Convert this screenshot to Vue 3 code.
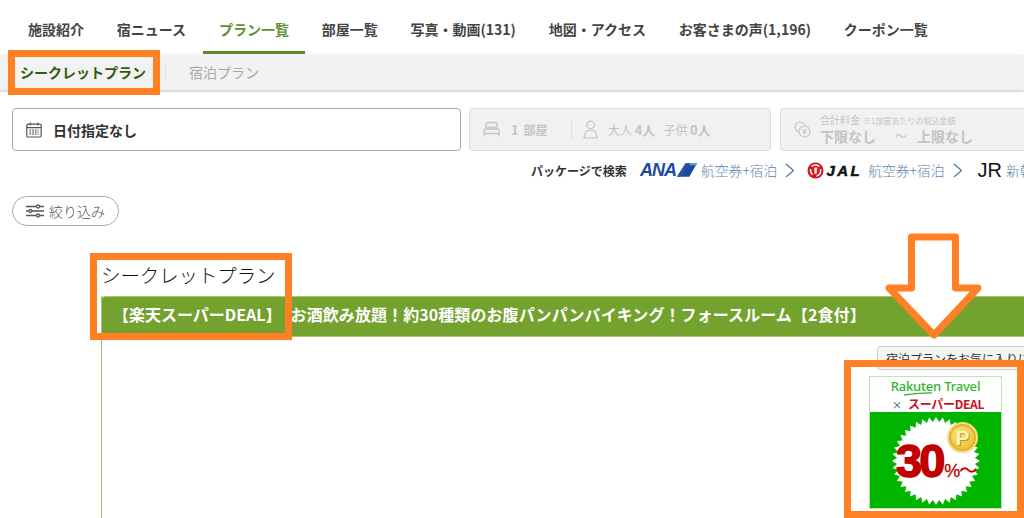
<script setup>
const navItems = [
  { label: '施設紹介' },
  { label: '宿ニュース' },
  { label: 'プラン一覧', active: true },
  { label: '部屋一覧' },
  { label: '写真・動画(131)' },
  { label: '地図・アクセス' },
  { label: 'お客さまの声(1,196)' },
  { label: 'クーポン一覧' }
]

const burst = (() => {
  const pts = []
  const n = 40
  for (let i = 0; i < n * 2; i++) {
    const r = i % 2 ? 39 : 44
    const a = (Math.PI * i) / n
    pts.push(`${(66 + r * Math.cos(a)).toFixed(1)},${(49 + r * Math.sin(a)).toFixed(1)}`)
  }
  return pts.join(' ')
})()
</script>

<template>
  <div class="page">
    <nav class="nav">
      <a v-for="item in navItems" :key="item.label" class="nav-item" :class="{ active: item.active }">{{ item.label }}</a>
    </nav>

    <div class="subbar">
      <span class="sub-active">シークレットプラン</span>
      <span class="sub-sep"></span>
      <span class="sub-other">宿泊プラン</span>
    </div>

    <div class="search">
      <div class="field date">
        <svg class="cal" width="16" height="16" viewBox="0 0 16 16" fill="none" stroke="#555" stroke-width="1.2">
          <rect x="0.8" y="2.2" width="14.4" height="12.8" rx="1.2" />
          <path d="M0.8 5.6h14.4M4.2 0.6v3M11.8 0.6v3" />
          <path d="M3.5 8.2h9M3.5 10.2h9M3.5 12.2h9" stroke-dasharray="1.6 1.1" />
        </svg>
        <span>日付指定なし</span>
      </div>
      <div class="field off guests">
        <svg width="17" height="17" viewBox="0 0 17 17" fill="none" stroke="#c4c4c4" stroke-width="1.3">
          <path d="M3 8V3.2C3 2 3.800 1.500 5 1.500h7c1.200 0 2 .5 2 1.700V8" />
          <path d="M5 8V6.200h7V8" />
          <path d="M1 15.500V9.500C1 8.500 1.600 8 2.500 8h12c.9 0 1.500.5 1.500 1.500v6M1 12.500h15" />
        </svg>
        <span class="rooms"><b>1</b> <b class="unit">部屋</b></span>
        <span class="vsep"></span>
        <svg class="person" width="15" height="19" viewBox="0 0 15 19" fill="none" stroke="#c4c4c4" stroke-width="1.2">
          <circle cx="7.500" cy="5" r="3.800" />
          <path d="M1 18l1.300-5.200C2.700 11.300 4 10.500 5 10.500h5c1 0 2.300.8 2.700 2.300L14 18z" />
        </svg>
        <span class="people">大人 <b>4人</b></span>
        <span class="people next">子供 <b>0人</b></span>
      </div>
      <div class="field off price">
        <svg width="17" height="17" viewBox="0 0 17 17" fill="none" stroke="#c4c4c4" stroke-width="1.100">
          <circle cx="6" cy="6" r="5" />
          <circle cx="10.500" cy="10.500" r="5.500" fill="#f1f1f1" />
          <path d="M8.500 8l2 2.500 2-2.500M10.500 10.500V14M8.800 11.500h3.400" />
        </svg>
        <div class="price-text">
          <div class="price-top">合計料金<small>※1部屋あたりの税込金額</small></div>
          <div class="price-range"><span>下限なし</span><i>～</i><span>上限なし</span></div>
        </div>
      </div>
    </div>

    <div class="package">
      <b class="pk-label">パッケージで検索</b>
      <span class="ana">ANA</span>
      <svg class="ana-mark" width="20" height="14" viewBox="0 0 21 14">
        <polygon points="9,0 21,0 13,14 0,14" fill="#1b4a9c" />
        <polygon points="14,0 21,0 20,2 13,2" fill="#5aa5de" />
        <polygon points="9,0 13,0 4,14 0,14" fill="#24559f" />
      </svg>
      <span class="pk-link first">航空券+宿泊</span>
      <svg class="chev" width="10" height="15" viewBox="0 0 10 15" fill="none" stroke="#4d7ba6" stroke-width="1.200"><path d="M1 1l7.500 6.500L1 14" /></svg>
      <svg class="crane" width="17" height="17" viewBox="0 0 17 17">
        <circle cx="8.500" cy="8.500" r="8" fill="#d3141c" />
        <path d="M4.500 4.500C6.500 2.700 10 2.600 12.300 4.300M13.500 7c.6 3-1 6-4 7.200M3.600 7c-.4 2.300.4 4.300 2 5.800" fill="none" stroke="#fff" stroke-width="1.500" />
        <path d="M7 5.500h3.500l-1 6.500H7.500z" fill="#fff" opacity=".85" />
      </svg>
      <span class="jal">JAL</span>
      <span class="pk-link">航空券+宿泊</span>
      <svg class="chev" width="10" height="15" viewBox="0 0 10 15" fill="none" stroke="#4d7ba6" stroke-width="1.200"><path d="M1 1l7.500 6.500L1 14" /></svg>
      <span class="jr">JR</span>
      <span class="pk-link jr-link">新幹線+宿泊</span>
    </div>

    <button class="filter">
      <svg width="18" height="14" viewBox="0 0 18 14" fill="none" stroke="#555" stroke-width="1.300">
        <path d="M0 2.500h18M0 7h18M0 11.500h18" />
        <circle cx="12" cy="2.500" r="1.500" fill="#fff" />
        <circle cx="4.500" cy="7" r="1.500" fill="#fff" />
        <circle cx="12" cy="11.500" r="1.500" fill="#fff" />
      </svg>
      <span>絞り込み</span>
    </button>

    <section class="plans">
      <h2 class="plans-title">シークレットプラン</h2>
      <div class="plan">
        <h3 class="plan-head"><span>【楽天スーパーDEAL】</span><span class="head-rest">お酒飲み放題！約30種類のお腹パンパンバイキング！フォースルーム【2食付】</span></h3>
        <div class="plan-body">
          <button class="fav">宿泊プランをお気に入りに追加</button>
          <div class="deal">
            <div class="deal-top">
              <div class="rk">Rakuten Travel</div>
              <svg class="swoosh" width="30" height="4" viewBox="0 0 32 4" fill="none" stroke="#2db52d" stroke-width="1.200"><path d="M1 3.200C10 1.500 22 1 31 .8" /></svg>
              <div class="sd"><span class="times">×</span><b>スーパーDEAL</b></div>
            </div>
            <div class="deal-main">
              <svg class="burst" width="132" height="96" viewBox="0 0 132 96">
                <polygon :points="burst" fill="#fff" />
              </svg>
              <div class="coin">P</div>
              <div class="pct"><b>30</b><span>%～</span></div>
            </div>
          </div>
        </div>
      </div>
    </section>

    <div class="mark mark-tab"></div>
    <div class="mark mark-head"></div>
    <div class="mark mark-deal"></div>
    <svg class="mark-arrow" width="110" height="116" viewBox="0 0 110 116">
      <polygon points="30.500,4 74.500,4 74.500,55 97,55 53,102 8,55 30.500,55" fill="#fff" stroke="#ff8025" stroke-width="7" stroke-linejoin="round" />
    </svg>
  </div>
</template>

<style>
html, body { margin: 0; background: #fff; }
</style>

<style scoped>
.page {
  position: relative;
  width: 1024px;
  height: 518px;
  overflow: hidden;
  background: #fff;
  color: #333;
  font-family: "Noto Sans CJK JP", "Noto Sans", sans-serif;
}
.nav {
  display: flex;
  height: 54px;
  padding-left: 12px;
  margin-bottom: 1px;
  box-sizing: border-box;
}
.nav-item {
  display: block;
  box-sizing: border-box;
  height: 54px;
  padding: 19px 16px 0;
  margin-right: .8px;
  font-size: 14px;
  line-height: 20px;
  font-weight: 700;
  color: #444;
  white-space: nowrap;
}
.nav-item.active {
  color: #5f8f34;
  border-bottom: 3px solid #5b8c2a;
}
.subbar {
  display: flex;
  align-items: center;
  height: 35px;
  background: #f2f2f2;
  box-shadow: 0 1px 3px rgba(0, 0, 0, .25);
  padding-left: 20px;
  padding-bottom: 1px;
  box-sizing: border-box;
  font-size: 14px;
}
.sub-active { font-weight: 700; color: #2f5a14; width: 127px; white-space: nowrap; }
.sub-sep { width: 1px; height: 14px; background: #ddd; margin-left: 18px; }
.sub-other { margin-left: 23px; color: #a8a8a8; }
.search {
  display: flex;
  gap: 8px;
  margin-top: 18px;
  padding-left: 12px;
  width: 1100px;
}
.field {
  box-sizing: border-box;
  display: flex;
  align-items: center;
  height: 43px;
  border-radius: 4px;
}
.date {
  width: 449px;
  border: 1px solid #aaa;
  padding-left: 13px;
  font-size: 14px;
  font-weight: 700;
  color: #333;
}
.date span { margin-left: 11px; }
.off {
  background: #f1f1f1;
  border: 1px solid #ddd;
  color: #c4c4c4;
  font-size: 12px;
}
.guests { width: 302px; padding-left: 13px; }
.rooms { margin-left: 11px; width: 60px; font-size: 13px; }
.rooms .unit { font-size: 12px; margin-left: 2px; }
.vsep { width: 1px; height: 20px; background: #ddd; }
.person { margin-left: 11px; }
.people { margin-left: 10px; }
.people.next { margin-left: 8px; }
.people b { font-size: 13px; }
.price { width: 300px; margin-left: 1px; padding-left: 13px; }
.price-text { margin-left: 9px; padding-bottom: 2px; }
.price-top { font-size: 10px; line-height: 13px; }
.price-top small { font-size: 8px; margin-left: 3px; }
.price-range {
  display: flex;
  font-size: 14px;
  line-height: 18px;
  font-weight: 700;
}
.price-range i { font-style: normal; font-weight: 400; margin: 0 10px 0 19px; font-size: 12px; }
.package {
  display: flex;
  align-items: center;
  height: 20px;
  margin-top: 9px;
  padding-left: 531px;
  white-space: nowrap;
  width: 600px;
}
.pk-label { font-size: 12px; color: #333; width: 109px; flex: none; }
.ana {
  font-family: "Liberation Sans", sans-serif;
  font-style: italic;
  font-weight: 700;
  font-size: 18px;
  letter-spacing: -1px;
  color: #1b4a9c;
}
.ana-mark { margin-left: 1px; }
.pk-link { margin-left: 6px; font-size: 13.800px; font-weight: 300; color: #5d86ad; }
.pk-link.first { margin-left: 4px; }
.chev { margin-left: 8px; }
.crane { margin-left: 12px; }
.jal {
  margin-left: 2px;
  font-family: "Liberation Sans", sans-serif;
  font-style: italic;
  font-weight: 700;
  font-size: 15px;
  letter-spacing: 2.500px;
  color: #111;
  -webkit-text-stroke: .5px #111;
}
.jr {
  margin-left: 15px;
  font-family: "Liberation Sans", sans-serif;
  font-size: 20px;
  color: #111;
}
.jr-link { margin-left: 4px; }
.filter {
  display: flex;
  align-items: center;
  box-sizing: border-box;
  width: 107px;
  height: 30px;
  margin: 16px 0 0 12px;
  padding: 0 0 0 13px;
  background: #fff;
  border: 1px solid #aaa;
  border-radius: 15px;
  font-family: inherit;
  font-size: 14px;
  font-weight: 300;
  color: #555;
}
.filter span { margin-left: 5px; }
.plans { margin: 33px 0 0 101px; width: 1000px; }
.plans-title {
  margin: 0;
  height: 37px;
  font-size: 19.400px;
  line-height: 31px;
  font-weight: 300;
  color: #111;
}
.plan {
  border-left: 1px solid #9cc068;
}
.plan-head {
  box-sizing: border-box;
  margin: 0 0 0 -1px;
  height: 41px;
  padding-left: 11px;
  background: #73a22e;
  border: 1px solid #a5c77a;
  border-radius: 4px 0 0 0;
  font-size: 16px;
  line-height: 35px;
  font-weight: 700;
  color: #fff;
  white-space: nowrap;
}
.head-rest { margin-left: 9px; letter-spacing: .08px; }
.plan-body {
  position: relative;
  height: 200px;
}
.fav {
  position: absolute;
  left: 775px;
  top: 9px;
  box-sizing: border-box;
  width: 190px;
  height: 24px;
  padding: 0 0 0 8px;
  text-align: left;
  background: #f4f4f4;
  border: 1px solid #ccc;
  border-radius: 3px;
  font-family: inherit;
  font-size: 12px;
  color: #333;
}
.deal {
  position: absolute;
  left: 767px;
  top: 39px;
  box-sizing: border-box;
  width: 133px;
  height: 133px;
  background: #fff;
  border: 1px solid #b7e6b0;
}
.deal-top { position: relative; height: 35px; text-align: center; }
.rk {
  font-family: "Noto Sans", sans-serif;
  font-size: 13px;
  font-weight: 500;
  line-height: 16px;
  padding-top: 1px;
  color: #2db52d;
  letter-spacing: -.2px;
}
.swoosh { position: absolute; left: 33px; top: 15px; }
.sd { display: flex; align-items: center; height: 16px; padding: 2px 0 0 22px; }
.sd b { font-size: 12px; line-height: 16px; color: #c3131c; letter-spacing: -.3px; }
.times { font-size: 10px; color: #444; margin-right: 6px; }
.deal-main {
  position: relative;
  height: 96px;
  background: #00b400;
}
.burst { position: absolute; left: 0; top: 0; }
.coin {
  position: absolute;
  left: 77px;
  top: 10px;
  width: 31px;
  height: 31px;
  box-sizing: border-box;
  border-radius: 50%;
  border: 2px solid #f5dc7c;
  box-shadow: inset 0 0 0 2px #e0b030;
  background: radial-gradient(circle at 40% 35%, #f9e37c, #ecc23c 70%, #d8a828);
  color: #fdf2b0;
  text-shadow: 1px 1px 0 #c2921c;
  font-family: "Liberation Sans", sans-serif;
  font-size: 21px;
  font-weight: 700;
  line-height: 27px;
  text-align: center;
}
.pct {
  position: absolute;
  left: 26px;
  top: 25px;
  display: flex;
  align-items: baseline;
  font-family: "Liberation Sans", "Noto Sans CJK JP", sans-serif;
  color: #c00000;
  white-space: nowrap;
}
.pct b { font-size: 47px; line-height: 48px; letter-spacing: -3px; -webkit-text-stroke: 1.500px #c00000; }
.pct span { font-size: 18px; margin-left: 2px; letter-spacing: -1px; -webkit-text-stroke: .3px #c00000; }
.mark {
  position: absolute;
  box-sizing: border-box;
  border: 7px solid #ff8025;
  pointer-events: none;
}
.mark-tab { left: 8px; top: 50px; width: 152px; height: 45px; }
.mark-head { left: 90px; top: 253px; width: 202px; height: 87px; }
.mark-deal { left: 844px; top: 360px; width: 180px; height: 158px; }
.mark-arrow { position: absolute; left: 881px; top: 233px; pointer-events: none; }
</style>
